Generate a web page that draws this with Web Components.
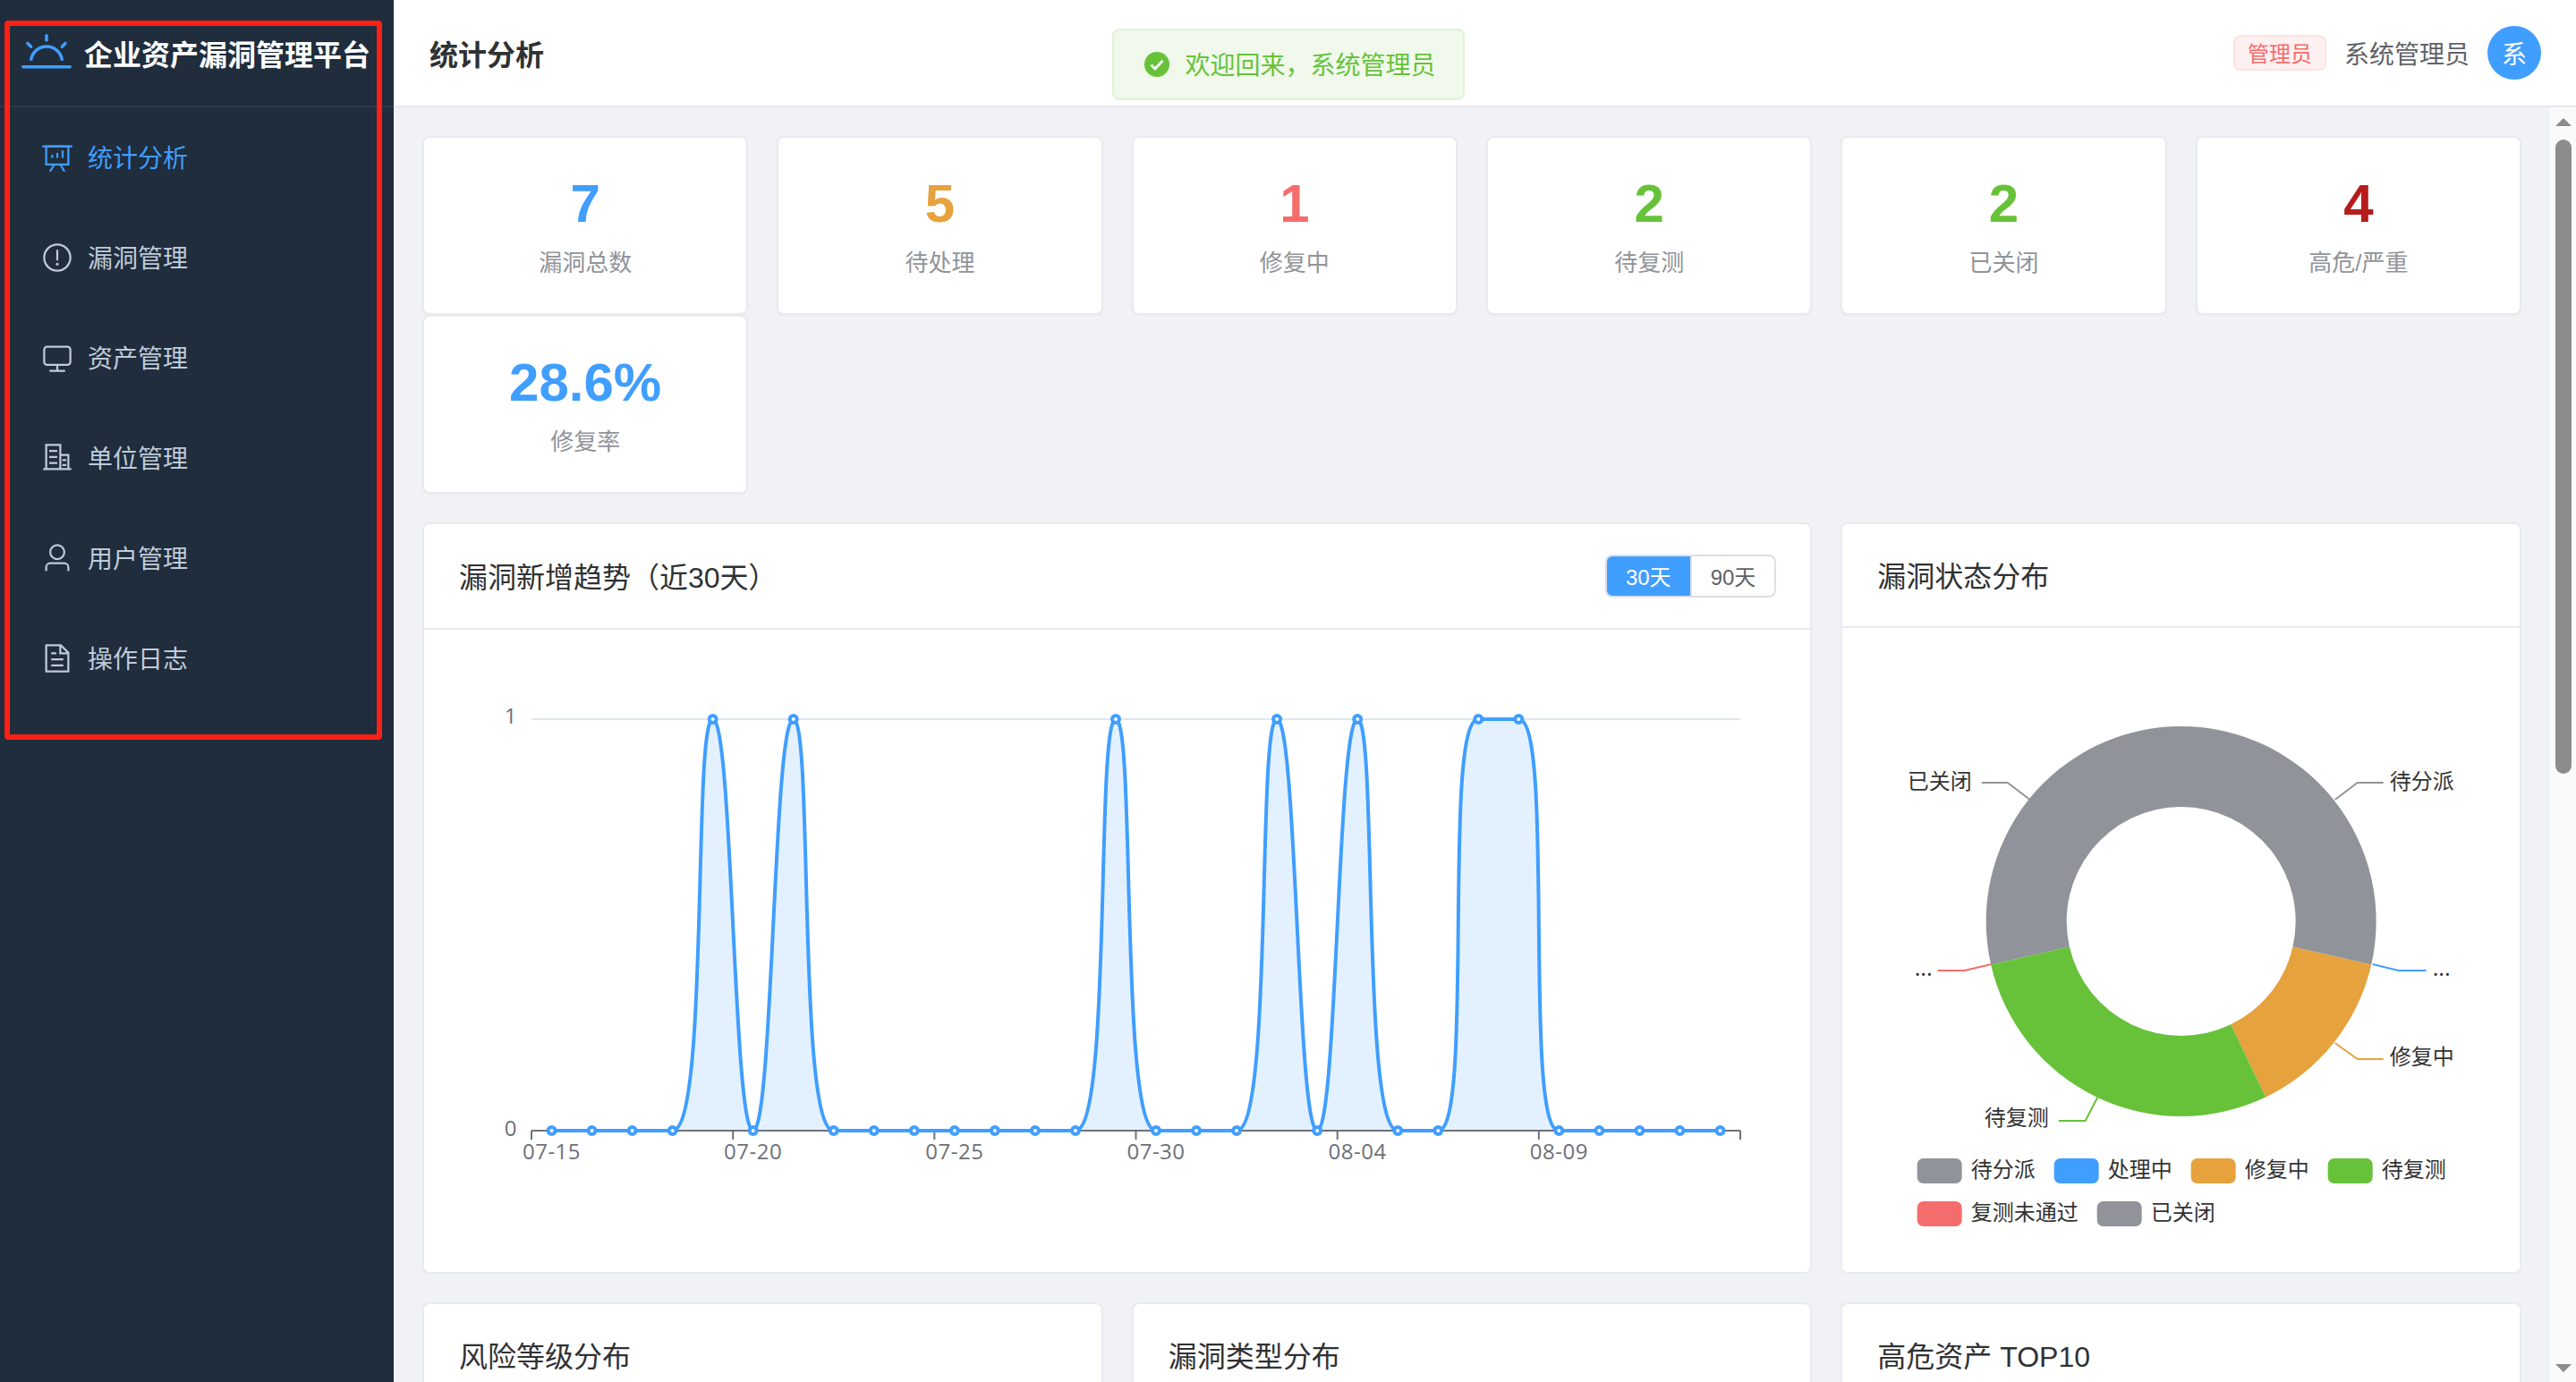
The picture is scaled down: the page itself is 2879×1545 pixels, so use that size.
<!DOCTYPE html>
<html lang="zh">
<head>
<meta charset="utf-8">
<title>统计分析</title>
<style>
html, body { margin: 0; height: 100%; overflow: hidden; }
body { font-family: "Liberation Sans", "Noto Sans CJK SC", sans-serif; background: #f0f2f5; }
</style>
</head>
<body>
<app-shell>
  <side-bar slot="side">
    <nav-item label="统计分析" icon="board" active></nav-item>
    <nav-item label="漏洞管理" icon="warn"></nav-item>
    <nav-item label="资产管理" icon="monitor"></nav-item>
    <nav-item label="单位管理" icon="office"></nav-item>
    <nav-item label="用户管理" icon="user"></nav-item>
    <nav-item label="操作日志" icon="doc"></nav-item>
  </side-bar>
  <top-bar slot="top" heading="统计分析" role-name="管理员" user="系统管理员"></top-bar>
  <stat-grid>
    <stat-card value="7" label="漏洞总数" color="#409eff"></stat-card>
    <stat-card value="5" label="待处理" color="#e6a23c"></stat-card>
    <stat-card value="1" label="修复中" color="#f56c6c"></stat-card>
    <stat-card value="2" label="待复测" color="#67c23a"></stat-card>
    <stat-card value="2" label="已关闭" color="#67c23a"></stat-card>
    <stat-card value="4" label="高危/严重" color="#b71c1c"></stat-card>
    <stat-card value="28.6%" label="修复率" color="#409eff"></stat-card>
  </stat-grid>
  <chart-grid>
    <chart-card class="wide" heading="漏洞新增趋势（近30天）" head="116">
      <range-switch slot="extra"></range-switch>
      <trend-chart></trend-chart>
    </chart-card>
    <chart-card heading="漏洞状态分布" head="114">
      <status-donut></status-donut>
    </chart-card>
    <chart-card heading="风险等级分布" head="114"></chart-card>
    <chart-card heading="漏洞类型分布" head="114"></chart-card>
    <chart-card heading="高危资产 TOP10" head="114"></chart-card>
  </chart-grid>
</app-shell>
<welcome-toast text="欢迎回来，系统管理员"></welcome-toast>
<mark-box></mark-box>

<script>
const ICONS = {
  sunrise: '<path d="M32 768h960a32 32 0 1 1 0 64H32a32 32 0 1 1 0-64m129.408-96a352 352 0 0 1 701.184 0h-64.32a288 288 0 0 0-572.544 0h-64.32zM512 128a32 32 0 0 1 32 32v96a32 32 0 0 1-64 0v-96a32 32 0 0 1 32-32m407.296 168.704a32 32 0 0 1 0 45.248l-67.84 67.84a32 32 0 1 1-45.248-45.248l67.84-67.84a32 32 0 0 1 45.248 0zm-814.592 0a32 32 0 0 1 45.248 0l67.84 67.84a32 32 0 1 1-45.248 45.248l-67.84-67.84a32 32 0 0 1 0-45.248"/>',
  board: '<path d="M32 128h960v64H32z"/><path fill-rule="evenodd" d="M192 192v512h640V192zm-64-64h768v640H128z"/><path d="M322.176 960H248.32l144.64-250.56 55.424 32zm453.888 0h-73.856L576 741.44l55.424-32z"/><rect x="320" y="430" width="64" height="100" rx="24"/><rect x="480" y="360" width="64" height="170" rx="24"/><rect x="650" y="285" width="64" height="245" rx="24"/>',
  warn: '<path fill-rule="evenodd" d="M512 64a448 448 0 1 1 0 896 448 448 0 0 1 0-896m0 832a384 384 0 0 0 0-768 384 384 0 0 0 0 768m48-176a48 48 0 1 1-96 0 48 48 0 0 1 96 0m-48-464a32 32 0 0 1 32 32v288a32 32 0 0 1-64 0V288a32 32 0 0 1 32-32"/>',
  monitor: '<path fill-rule="evenodd" d="M544 768v128h192a32 32 0 1 1 0 64H288a32 32 0 1 1 0-64h192V768H192A128 128 0 0 1 64 640V256a128 128 0 0 1 128-128h640a128 128 0 0 1 128 128v384a128 128 0 0 1-128 128zM192 192a64 64 0 0 0-64 64v384a64 64 0 0 0 64 64h640a64 64 0 0 0 64-64V256a64 64 0 0 0-64-64z"/>',
  office: '<path fill-rule="evenodd" d="M192 128v704h384V128zm-64-64h512v320h256v448h64v64H64v-64h64zm512 384v384h192V448z"/><path d="M256 256h256v64H256zM256 448h256v64H256zM256 640h256v64H256zM672 544h128v64H672zM672 704h128v64H672z"/>',
  user: '<path d="M512 512a192 192 0 1 0 0-384 192 192 0 0 0 0 384m0 64a256 256 0 1 1 0-512 256 256 0 0 1 0 512m320 320v-96a96 96 0 0 0-96-96H288a96 96 0 0 0-96 96v96a32 32 0 1 1-64 0v-96a160 160 0 0 1 160-160h448a160 160 0 0 1 160 160v96a32 32 0 1 1-64 0"/>',
  doc: '<path fill-rule="evenodd" d="M832 384H576V128H192v768h640zm-26.496-64L640 154.496V320zM160 64h480l256 256v608a32 32 0 0 1-32 32H160a32 32 0 0 1-32-32V96a32 32 0 0 1 32-32m160 448h384v64H320zm0-192h160v64H320zm0 384h384v64H320z"/>'
};

class AppShell extends HTMLElement {
  constructor() {
    super();
    this.attachShadow({ mode: 'open' }).innerHTML = `
    <style>
      :host { display: flex; width: 2879px; height: 1545px; overflow: hidden; }
      .right { flex: 1; min-width: 0; display: flex; flex-direction: column; }
      .below { flex: 1; min-height: 0; display: flex; }
      .content { flex: 1; min-width: 0; overflow: hidden; padding: 32px 32px 0; box-sizing: border-box; background: #f0f2f5; }
    </style>
    <slot name="side"></slot>
    <div class="right">
      <slot name="top"></slot>
      <div class="below">
        <div class="content"><slot></slot></div>
        <scroll-rail></scroll-rail>
      </div>
    </div>`;
  }
}

class SideBar extends HTMLElement {
  constructor() {
    super();
    this.attachShadow({ mode: 'open' }).innerHTML = `
    <style>
      :host { display: block; width: 440px; flex: none; background: #1f2d3d; }
      .logo { height: 118px; border-bottom: 2px solid #2b3a4b; display: flex; align-items: center; padding-left: 24px; gap: 14px; }
      svg { width: 56px; height: 56px; fill: #409eff; flex: none; }
      span { font-size: 32px; font-weight: 700; color: #fff; white-space: nowrap; }
    </style>
    <div class="logo"><svg viewBox="0 0 1024 1024">${ICONS.sunrise}</svg><span>企业资产漏洞管理平台</span></div>
    <slot></slot>`;
  }
}

class NavItem extends HTMLElement {
  connectedCallback() {
    const root = this.shadowRoot || this.attachShadow({ mode: 'open' });
    root.innerHTML = `
    <style>
      :host { display: flex; align-items: center; height: 112px; padding-left: 46px; color: #bfcbd9; font-size: 28px; }
      :host([active]) { color: #409eff; }
      svg { width: 36px; height: 36px; fill: currentColor; flex: none; margin-right: 16px; }
      span { padding-bottom: 3px; }
    </style>
    <svg viewBox="0 0 1024 1024">${ICONS[this.getAttribute('icon')]}</svg>
    <span>${this.getAttribute('label')}</span>`;
  }
}

class TopBar extends HTMLElement {
  connectedCallback() {
    const root = this.shadowRoot || this.attachShadow({ mode: 'open' });
    root.innerHTML = `
    <style>
      :host { display: flex; align-items: center; height: 118px; flex: none; padding: 0 39px 0 40px; background: #fff; border-bottom: 2px solid #e6e8ee; }
      h1 { margin: 0; font-size: 32px; font-weight: 700; color: #303133; flex: 1; }
      .tag { height: 40px; box-sizing: border-box; padding: 0 14px 2px; display: flex; align-items: center; font-size: 24px; color: #f56c6c; background: #fef0f0; border: 2px solid #fde2e2; border-radius: 8px; margin-right: 20px; }
      .name { font-size: 28px; color: #606266; margin-right: 20px; }
      .avatar { width: 60px; height: 60px; border-radius: 50%; background: #409eff; color: #fff; font-size: 28px; display: flex; align-items: center; justify-content: center; }
    </style>
    <h1>${this.getAttribute('heading')}</h1>
    <div class="tag">${this.getAttribute('role-name')}</div>
    <div class="name">${this.getAttribute('user')}</div>
    <div class="avatar">${this.getAttribute('user').charAt(0)}</div>`;
  }
}

class ScrollRail extends HTMLElement {
  constructor() {
    super();
    this.attachShadow({ mode: 'open' }).innerHTML = `
    <style>
      :host { display: flex; flex-direction: column; align-items: center; width: 29px; flex: none; background: #fafafa; box-sizing: border-box; padding: 12px 0 11px; }
      i { display: block; width: 0; height: 0; border-left: 9px solid transparent; border-right: 9px solid transparent; }
      .up { border-bottom: 9px solid #8c8c8c; }
      .down { border-top: 9px solid #8c8c8c; margin-top: auto; }
      .thumb { width: 18px; height: 709px; margin-top: 15px; background: #8c8c8c; border-radius: 9px; }
    </style>
    <i class="up"></i><div class="thumb"></div><i class="down"></i>`;
  }
}

class StatGrid extends HTMLElement {
  constructor() {
    super();
    this.attachShadow({ mode: 'open' }).innerHTML = `
    <style>
      :host { display: grid; grid-template-columns: repeat(6, 1fr); column-gap: 32px; margin-bottom: 32px; }
    </style>
    <slot></slot>`;
  }
}

class StatCard extends HTMLElement {
  connectedCallback() {
    const root = this.shadowRoot || this.attachShadow({ mode: 'open' });
    root.innerHTML = `
    <style>
      :host { display: block; height: 200px; box-sizing: border-box; background: #fff; border: 2px solid #e8eaf0; border-radius: 8px; text-align: center; padding-top: 40px; box-shadow: 0 1px 2px rgba(0,0,0,.03); }
      .num { font-size: 60px; font-weight: 700; line-height: 68px; }
      .lab { font-size: 26px; line-height: 38px; margin-top: 13px; color: #909399; }
    </style>
    <div class="num" style="color:${this.getAttribute('color')}">${this.getAttribute('value')}</div>
    <div class="lab">${this.getAttribute('label')}</div>`;
  }
}

class ChartGrid extends HTMLElement {
  constructor() {
    super();
    this.attachShadow({ mode: 'open' }).innerHTML = `
    <style>
      :host { display: grid; grid-template-columns: repeat(3, 1fr); gap: 32px; }
      ::slotted(.wide) { grid-column: span 2; }
    </style>
    <slot></slot>`;
  }
}

class ChartCard extends HTMLElement {
  connectedCallback() {
    const root = this.shadowRoot || this.attachShadow({ mode: 'open' });
    root.innerHTML = `
    <style>
      :host { display: block; height: 840px; box-sizing: border-box; background: #fff; border: 2px solid #e8eaf0; border-radius: 8px; overflow: hidden; }
      header { display: flex; align-items: center; justify-content: space-between; padding: 0 38px 0 39px; height: ${this.getAttribute('head')}px; border-bottom: 2px solid #e8eaf0; }
      h2 { margin: 0 0 2px; font-size: 32px; font-weight: 400; color: #303133; }
    </style>
    <header><h2>${this.getAttribute('heading')}</h2><slot name="extra"></slot></header>
    <slot></slot>`;
  }
}

class RangeSwitch extends HTMLElement {
  constructor() {
    super();
    this.attachShadow({ mode: 'open' }).innerHTML = `
    <style>
      :host { display: flex; height: 48px; box-sizing: border-box; font-size: 24px; border: 2px solid #dcdfe6; border-radius: 8px; overflow: hidden; }
      span { display: flex; align-items: center; padding: 0 21px 2px; color: #606266; background: #fff; }
      .on { color: #fff; background: #409eff; }
      .on + span { border-left: 2px solid #dcdfe6; }
    </style>
    <span class="on">30天</span><span>90天</span>`;
  }
}

// same smoothing as the chart library: control points split by segment length, clamped to the neighbours
function smoothPath(pts, smooth) {
  let d = `M${pts[0][0]} ${pts[0][1]}`;
  let cp0 = pts[0];
  for (let i = 1; i < pts.length; i++) {
    const [x, y] = pts[i];
    const [px, py] = pts[i - 1];
    let cp1x = x, cp1y = y, nx0 = x, ny0 = y;
    if (i < pts.length - 1) {
      const [nx, ny] = pts[i + 1];
      const vx = nx - px, vy = ny - py;
      const lenPrev = Math.hypot(x - px, y - py);
      const lenNext = Math.hypot(nx - x, ny - y);
      const ratio = lenNext / (lenNext + lenPrev);
      let ax = x + vx * smooth * ratio;
      let ay = y + vy * smooth * ratio;
      ax = Math.max(Math.min(ax, Math.max(nx, x)), Math.min(nx, x));
      ay = Math.max(Math.min(ay, Math.max(ny, y)), Math.min(ny, y));
      let bx = x - (ax - x) * lenPrev / lenNext;
      let by = y - (ay - y) * lenPrev / lenNext;
      bx = Math.max(Math.min(bx, Math.max(px, x)), Math.min(px, x));
      by = Math.max(Math.min(by, Math.max(py, y)), Math.min(py, y));
      cp1x = bx; cp1y = by;
      nx0 = x + (x - bx) * lenNext / lenPrev;
      ny0 = y + (y - by) * lenNext / lenPrev;
    }
    d += `C${cp0[0]} ${cp0[1]} ${cp1x} ${cp1y} ${x} ${y}`;
    cp0 = [nx0, ny0];
  }
  return d;
}

class TrendChart extends HTMLElement {
  constructor() {
    super();
    const left = 594, right = 1945, top = 804, zero = 1264;
    const band = (right - left) / 30;
    const hits = [4, 6, 14, 18, 20, 23, 24];
    const pts = [];
    for (let i = 0; i < 30; i++) pts.push([left + band * (i + .5), hits.includes(i) ? top : zero]);
    const line = smoothPath(pts, .5);
    const dots = pts.map(p => `<circle cx="${p[0]}" cy="${p[1]}" r="4" fill="#fff" stroke="#409eff" stroke-width="4"/>`).join('');
    let ticks = '';
    let labels = '';
    const names = ['07-15', '07-20', '07-25', '07-30', '08-04', '08-09'];
    names.forEach((n, k) => {
      const i = k * 5;
      ticks += `<path d="M${left + band * i} ${zero} v10"/>`;
      labels += `<text x="${left + band * (i + .5)}" y="1296" text-anchor="middle">${n}</text>`;
    });
    ticks += `<path d="M${right} ${zero} v10"/>`;
    this.attachShadow({ mode: 'open' }).innerHTML = `
    <style>
      :host { display: block; }
      svg { display: block; }
      text { font: 24px "Open Sans", "Noto Sans", sans-serif; letter-spacing: .5px; fill: #6e7079; }
    </style>
    <svg width="1549" height="718" viewBox="474 704 1549 718">
      <path d="M${left} ${top}H${right}" stroke="#e0e6f1" stroke-width="2" fill="none"/>
      <path d="${line}L${pts[29][0]} ${zero}L${pts[0][0]} ${zero}Z" fill="#409eff" fill-opacity=".15"/>
      <g stroke="#6e7079" stroke-width="2" fill="none"><path d="M${left} ${zero}H${right}"/>${ticks}</g>
      <path d="${line}" fill="none" stroke="#409eff" stroke-width="4"/>
      ${dots}
      <text x="578" y="809" text-anchor="end">1</text>
      <text x="578" y="1270" text-anchor="end">0</text>
      ${labels}
    </svg>`;
  }
}

class StatusDonut extends HTMLElement {
  constructor() {
    super();
    const cx = 2438, cy = 1030, R = 218, r = 128;
    const pos = (rad, deg) => {
      const a = deg * Math.PI / 180;
      return [cx + rad * Math.sin(a), cy - rad * Math.cos(a)];
    };
    const slice = (a, b, color) => {
      const [x1, y1] = pos(R, a), [x2, y2] = pos(R, b), [x3, y3] = pos(r, b), [x4, y4] = pos(r, a);
      const big = b - a > 180 ? 1 : 0;
      return `<path fill="${color}" d="M${x1} ${y1}A${R} ${R} 0 ${big} 1 ${x2} ${y2}L${x3} ${y3}A${r} ${r} 0 ${big} 0 ${x4} ${y4}Z"/>`;
    };
    const step = 360 / 7;
    // both grey slices meet at 12 o'clock, drawn as one piece so no seam shows
    const slices = slice(-step * 2, step * 2, '#909399') + slice(step * 2, step * 3, '#e6a23c') + slice(step * 3, step * 5, '#67c23a');
    const leads = [
      ['#909399', '2610 894 2635 875 2664 875'],
      ['#909399', '2269 894 2244 875 2215 875'],
      ['#409eff', '2652 1078 2681 1085 2712 1085'],
      ['#f56c6c', '2226 1078 2196 1085 2166 1085'],
      ['#e6a23c', '2610 1166 2635 1184 2664 1184'],
      ['#67c23a', '2345 1226 2331 1253 2301 1253']
    ].map(l => `<polyline points="${l[1]}" stroke="${l[0]}" stroke-width="2" fill="none"/>`).join('');
    const swatches = [
      [2143, 1296, '#909399', '待分派'], [2296, 1296, '#409eff', '处理中'], [2449, 1296, '#e6a23c', '修复中'], [2602, 1296, '#67c23a', '待复测'],
      [2143, 1344, '#f56c6c', '复测未通过'], [2344, 1344, '#909399', '已关闭']
    ].map(s => `<rect x="${s[0]}" y="${s[1] - 1}" width="50" height="28" rx="7" fill="${s[2]}"/><text x="${s[0] + 60}" y="${s[1] + 20}">${s[3]}</text>`).join('');
    this.attachShadow({ mode: 'open' }).innerHTML = `
    <style>
      :host { display: block; }
      svg { display: block; }
      text { font: 24px "Noto Sans CJK SC", "Noto Sans", sans-serif; fill: #333; }
    </style>
    <svg width="757" height="720" viewBox="2059.33 702 757 720">
      ${slices}
      ${leads}
      <text x="2204" y="882" text-anchor="end">已关闭</text>
      <text x="2671" y="882">待分派</text>
      <text x="2160" y="1091" text-anchor="end">...</text>
      <text x="2719" y="1091">...</text>
      <text x="2671" y="1190">修复中</text>
      <text x="2290" y="1258" text-anchor="end">待复测</text>
      ${swatches}
    </svg>`;
  }
}

class WelcomeToast extends HTMLElement {
  connectedCallback() {
    const root = this.shadowRoot || this.attachShadow({ mode: 'open' });
    root.innerHTML = `
    <style>
      :host { position: fixed; top: 32px; left: 50%; transform: translateX(-50%); display: flex; align-items: center; gap: 18px; height: 80px; box-sizing: border-box; padding: 0 30px 0 34px; background: #f0f9eb; border: 2px solid #e1f3d8; border-radius: 8px; color: #67c23a; font-size: 28px; white-space: nowrap; }
      svg { width: 28px; height: 28px; flex: none; }
      span { padding-bottom: 3px; }
    </style>
    <svg viewBox="0 0 28 28"><circle cx="14" cy="14" r="14" fill="#67c23a"/><path d="M7.5 14.5l4.5 4.3 8.5-9" fill="none" stroke="#f0f9eb" stroke-width="3"/></svg>
    <span>${this.getAttribute('text')}</span>`;
  }
}

class MarkBox extends HTMLElement {
  constructor() {
    super();
    this.attachShadow({ mode: 'open' }).innerHTML = `
    <style>
      :host { position: fixed; left: 5px; top: 23px; width: 422px; height: 804px; box-sizing: border-box; border: 6px solid #ff2116; border-radius: 4px; pointer-events: none; }
    </style>`;
  }
}

customElements.define('app-shell', AppShell);
customElements.define('side-bar', SideBar);
customElements.define('nav-item', NavItem);
customElements.define('top-bar', TopBar);
customElements.define('scroll-rail', ScrollRail);
customElements.define('stat-grid', StatGrid);
customElements.define('stat-card', StatCard);
customElements.define('chart-grid', ChartGrid);
customElements.define('chart-card', ChartCard);
customElements.define('range-switch', RangeSwitch);
customElements.define('trend-chart', TrendChart);
customElements.define('status-donut', StatusDonut);
customElements.define('welcome-toast', WelcomeToast);
customElements.define('mark-box', MarkBox);
</script>
</body>
</html>
